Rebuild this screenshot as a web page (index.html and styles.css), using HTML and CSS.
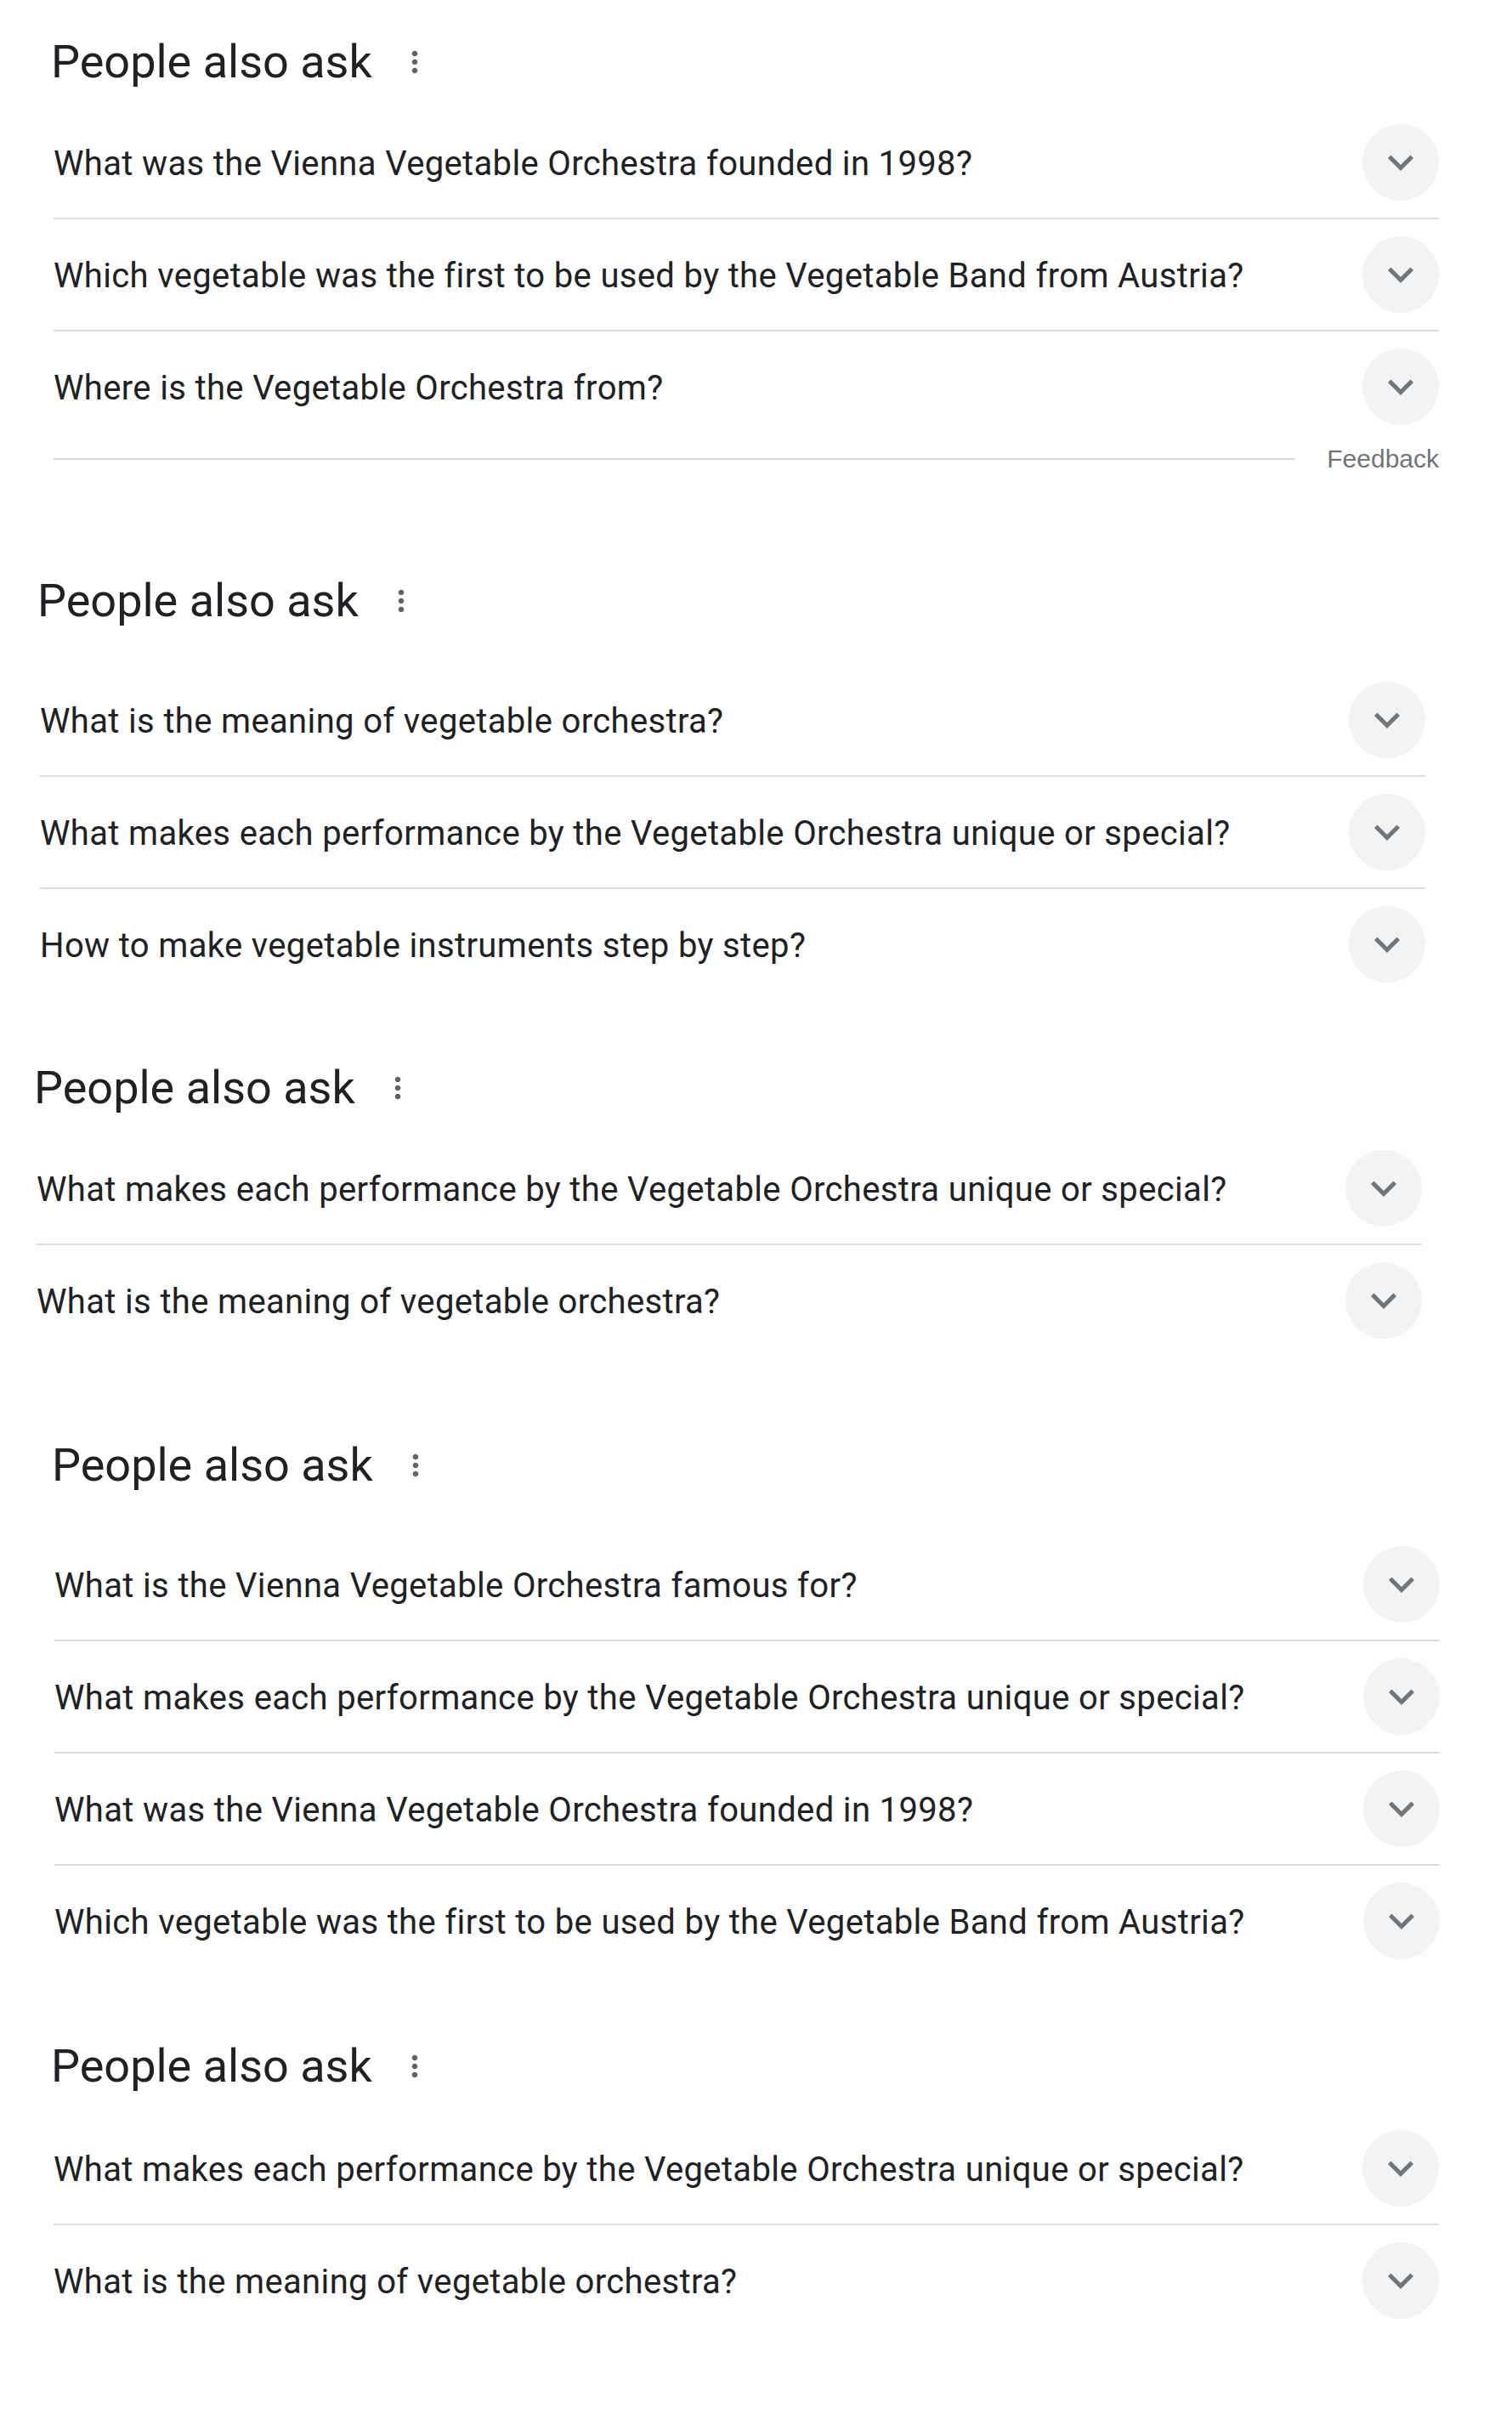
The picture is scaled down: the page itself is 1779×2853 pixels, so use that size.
FILE: index.html
```html
<!DOCTYPE html>
<html lang="en">
<head>
<meta charset="utf-8">
<title>People also ask</title>
<link rel="stylesheet" href="styles.css">
</head>
<body>
<main class="page">

  <section class="paa paa--one">
    <div class="paa-head">
      <h2 class="paa-title">People also ask</h2>
      <span class="paa-more" aria-label="About this result"><svg viewBox="0 0 24 24" width="40" height="40"><path d="M12 8c1.1 0 2-.9 2-2s-.9-2-2-2-2 .9-2 2 .9 2 2 2zm0 2c-1.1 0-2 .9-2 2s.9 2 2 2 2-.9 2-2-.9-2-2-2zm0 6c-1.1 0-2 .9-2 2s.9 2 2 2 2-.9 2-2-.9-2-2-2z"/></svg></span>
    </div>
    <div class="paa-list">
      <div class="paa-row"><span class="paa-q">What was the Vienna Vegetable Orchestra founded in 1998?</span><span class="paa-toggle"><svg viewBox="0 0 24 24" width="60" height="60"><path d="M16.59 8.59L12 13.17 7.41 8.59 6 10l6 6 6-6z"/></svg></span></div>
      <div class="paa-row"><span class="paa-q">Which vegetable was the first to be used by the Vegetable Band from Austria?</span><span class="paa-toggle"><svg viewBox="0 0 24 24" width="60" height="60"><path d="M16.59 8.59L12 13.17 7.41 8.59 6 10l6 6 6-6z"/></svg></span></div>
      <div class="paa-row"><span class="paa-q">Where is the Vegetable Orchestra from?</span><span class="paa-toggle"><svg viewBox="0 0 24 24" width="60" height="60"><path d="M16.59 8.59L12 13.17 7.41 8.59 6 10l6 6 6-6z"/></svg></span></div>
    </div>
    <div class="paa-feedback">
      <span class="paa-feedback-line"></span>
      <span class="paa-feedback-text">Feedback</span>
    </div>
  </section>

  <section class="paa paa--two">
    <div class="paa-head">
      <h2 class="paa-title">People also ask</h2>
      <span class="paa-more"><svg viewBox="0 0 24 24" width="40" height="40"><path d="M12 8c1.1 0 2-.9 2-2s-.9-2-2-2-2 .9-2 2 .9 2 2 2zm0 2c-1.1 0-2 .9-2 2s.9 2 2 2 2-.9 2-2-.9-2-2-2zm0 6c-1.1 0-2 .9-2 2s.9 2 2 2 2-.9 2-2-.9-2-2-2z"/></svg></span>
    </div>
    <div class="paa-list">
      <div class="paa-row"><span class="paa-q">What is the meaning of vegetable orchestra?</span><span class="paa-toggle"><svg viewBox="0 0 24 24" width="60" height="60"><path d="M16.59 8.59L12 13.17 7.41 8.59 6 10l6 6 6-6z"/></svg></span></div>
      <div class="paa-row"><span class="paa-q">What makes each performance by the Vegetable Orchestra unique or special?</span><span class="paa-toggle"><svg viewBox="0 0 24 24" width="60" height="60"><path d="M16.59 8.59L12 13.17 7.41 8.59 6 10l6 6 6-6z"/></svg></span></div>
      <div class="paa-row"><span class="paa-q">How to make vegetable instruments step by step?</span><span class="paa-toggle"><svg viewBox="0 0 24 24" width="60" height="60"><path d="M16.59 8.59L12 13.17 7.41 8.59 6 10l6 6 6-6z"/></svg></span></div>
    </div>
  </section>

  <section class="paa paa--three">
    <div class="paa-head">
      <h2 class="paa-title">People also ask</h2>
      <span class="paa-more"><svg viewBox="0 0 24 24" width="40" height="40"><path d="M12 8c1.1 0 2-.9 2-2s-.9-2-2-2-2 .9-2 2 .9 2 2 2zm0 2c-1.1 0-2 .9-2 2s.9 2 2 2 2-.9 2-2-.9-2-2-2zm0 6c-1.1 0-2 .9-2 2s.9 2 2 2 2-.9 2-2-.9-2-2-2z"/></svg></span>
    </div>
    <div class="paa-list">
      <div class="paa-row"><span class="paa-q">What makes each performance by the Vegetable Orchestra unique or special?</span><span class="paa-toggle"><svg viewBox="0 0 24 24" width="60" height="60"><path d="M16.59 8.59L12 13.17 7.41 8.59 6 10l6 6 6-6z"/></svg></span></div>
      <div class="paa-row"><span class="paa-q">What is the meaning of vegetable orchestra?</span><span class="paa-toggle"><svg viewBox="0 0 24 24" width="60" height="60"><path d="M16.59 8.59L12 13.17 7.41 8.59 6 10l6 6 6-6z"/></svg></span></div>
    </div>
  </section>

  <section class="paa paa--four">
    <div class="paa-head">
      <h2 class="paa-title">People also ask</h2>
      <span class="paa-more"><svg viewBox="0 0 24 24" width="40" height="40"><path d="M12 8c1.1 0 2-.9 2-2s-.9-2-2-2-2 .9-2 2 .9 2 2 2zm0 2c-1.1 0-2 .9-2 2s.9 2 2 2 2-.9 2-2-.9-2-2-2zm0 6c-1.1 0-2 .9-2 2s.9 2 2 2 2-.9 2-2-.9-2-2-2z"/></svg></span>
    </div>
    <div class="paa-list">
      <div class="paa-row"><span class="paa-q">What is the Vienna Vegetable Orchestra famous for?</span><span class="paa-toggle"><svg viewBox="0 0 24 24" width="60" height="60"><path d="M16.59 8.59L12 13.17 7.41 8.59 6 10l6 6 6-6z"/></svg></span></div>
      <div class="paa-row"><span class="paa-q">What makes each performance by the Vegetable Orchestra unique or special?</span><span class="paa-toggle"><svg viewBox="0 0 24 24" width="60" height="60"><path d="M16.59 8.59L12 13.17 7.41 8.59 6 10l6 6 6-6z"/></svg></span></div>
      <div class="paa-row"><span class="paa-q">What was the Vienna Vegetable Orchestra founded in 1998?</span><span class="paa-toggle"><svg viewBox="0 0 24 24" width="60" height="60"><path d="M16.59 8.59L12 13.17 7.41 8.59 6 10l6 6 6-6z"/></svg></span></div>
      <div class="paa-row"><span class="paa-q">Which vegetable was the first to be used by the Vegetable Band from Austria?</span><span class="paa-toggle"><svg viewBox="0 0 24 24" width="60" height="60"><path d="M16.59 8.59L12 13.17 7.41 8.59 6 10l6 6 6-6z"/></svg></span></div>
    </div>
  </section>

  <section class="paa paa--five">
    <div class="paa-head">
      <h2 class="paa-title">People also ask</h2>
      <span class="paa-more"><svg viewBox="0 0 24 24" width="40" height="40"><path d="M12 8c1.1 0 2-.9 2-2s-.9-2-2-2-2 .9-2 2 .9 2 2 2zm0 2c-1.1 0-2 .9-2 2s.9 2 2 2 2-.9 2-2-.9-2-2-2zm0 6c-1.1 0-2 .9-2 2s.9 2 2 2 2-.9 2-2-.9-2-2-2z"/></svg></span>
    </div>
    <div class="paa-list">
      <div class="paa-row"><span class="paa-q">What makes each performance by the Vegetable Orchestra unique or special?</span><span class="paa-toggle"><svg viewBox="0 0 24 24" width="60" height="60"><path d="M16.59 8.59L12 13.17 7.41 8.59 6 10l6 6 6-6z"/></svg></span></div>
      <div class="paa-row"><span class="paa-q">What is the meaning of vegetable orchestra?</span><span class="paa-toggle"><svg viewBox="0 0 24 24" width="60" height="60"><path d="M16.59 8.59L12 13.17 7.41 8.59 6 10l6 6 6-6z"/></svg></span></div>
    </div>
  </section>

</main>
</body>
</html>
```

FILE: styles.css
```css
html, body {
  margin: 0;
  padding: 0;
  background: #ffffff;
}

body {
  font-family: Roboto, "Noto Sans", Arial, sans-serif;
  color: #202124;
}

.page {
  display: flex;
  flex-direction: column;
  padding-bottom: 100px;
}

.paa {
  width: 1630px;
  display: flex;
  flex-direction: column;
}

.paa--one   { margin-top: 43px;  margin-left: 63px; }
.paa--two   { margin-top: 117px; margin-left: 47px; }
.paa--three { margin-top: 74px;  margin-left: 43px; }
.paa--four  { margin-top: 99px;  margin-left: 64px; }
.paa--five  { margin-top: 76px;  margin-left: 63px; }

.paa-head {
  display: flex;
  align-items: center;
  height: 60px;
  margin-bottom: 23px;
}

.paa--two .paa-head,
.paa--four .paa-head { margin-bottom: 45px; }
.paa--five .paa-head { margin-bottom: 25px; }

.paa-title {
  margin: 0 0 0 -3px;
  font-size: 54px;
  line-height: 60px;
  font-weight: 400;
  color: #202124;
}

.paa-more {
  display: flex;
  width: 40px;
  height: 40px;
  margin-left: 30px;
  fill: #5f6368;
}

.paa-list {
  display: flex;
  flex-direction: column;
}

.paa-row {
  display: flex;
  align-items: center;
  height: 130px;
  border-bottom: 2px solid #dadce0;
}

.paa-row:last-child {
  border-bottom: none;
}

.paa-q {
  flex: 1;
  padding-top: 4px;
  font-size: 40px;
  line-height: 56px;
  letter-spacing: 0.35px;
  color: #202124;
  white-space: nowrap;
}

.paa-toggle {
  flex: none;
  width: 90px;
  height: 90px;
  border-radius: 50%;
  background: #f1f3f4;
  display: flex;
  align-items: center;
  justify-content: center;
  fill: #70757a;
}

.paa-feedback {
  display: flex;
  align-items: center;
  height: 40px;
}

.paa-feedback-line {
  flex: 1;
  height: 2px;
  background: #dadce0;
  margin-right: 37px;
}

.paa-feedback-text {
  font-family: "Liberation Sans", Arial, sans-serif;
  font-size: 30px;
  line-height: 40px;
  color: #70757a;
}
```
